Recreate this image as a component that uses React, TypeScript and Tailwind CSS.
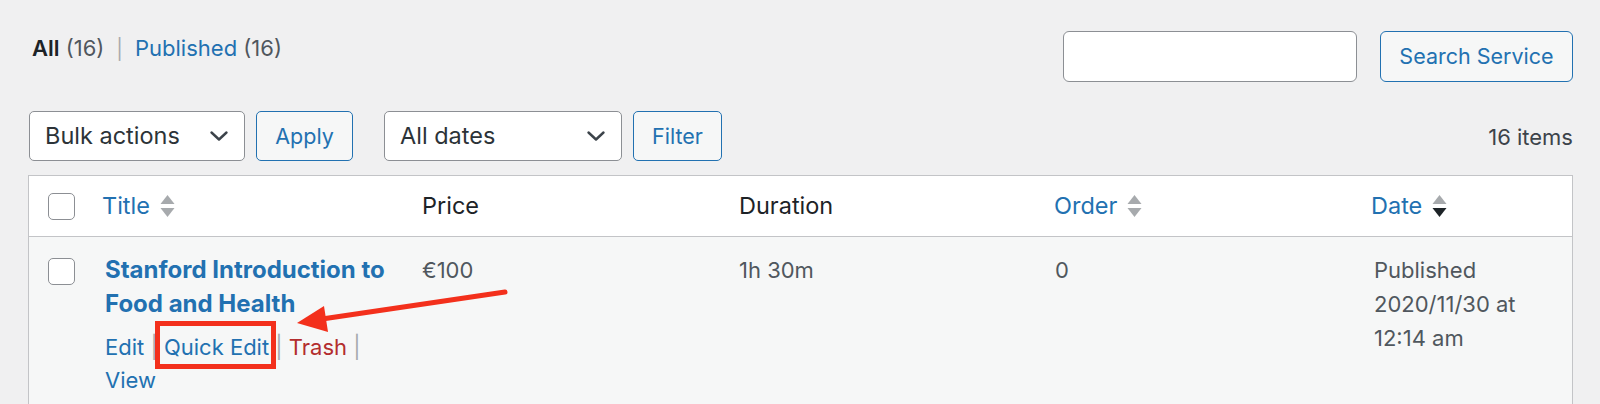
import React from "react";

function SortIcon({ active = false }: { active?: boolean }) {
  return (
    <svg width="15" height="25" viewBox="0 0 15 25" className="shrink-0">
      <polygon points="0.5,10 7.5,1 14.5,10" fill="#a7aaad" />
      <polygon points="0.5,14 14.5,14 7.5,23" fill={active ? "#1d2327" : "#a7aaad"} />
    </svg>
  );
}

function Checkbox() {
  return <div className="w-[27px] h-[27px] bg-white border-[1.5px] border-[#8c8f94] rounded-[5px]" />;
}

function Chevron() {
  return (
    <svg width="20" height="12" viewBox="0 0 20 12" className="shrink-0">
      <polyline points="2.5,2.5 10,9.5 17.5,2.5" fill="none" stroke="#3c434a" strokeWidth="2.4" strokeLinecap="round" strokeLinejoin="round" />
    </svg>
  );
}

export default function App() {
  return (
    <div className="relative w-[1600px] h-[404px] overflow-hidden bg-[#f0f0f1] pl-[28px] pr-[27px] font-['Inter','Noto_Sans',sans-serif] text-[#3c434a]">
      {/* Top row */}
      <div className="flex justify-between items-start pt-[31px]">
        <div className="pl-[4px] pt-[1px] text-[22px] leading-[33px] whitespace-nowrap">
          <span className="font-semibold text-[#1d2327]">All</span>{" "}
          <span className="text-[#50575e]">(16)</span>
          <span className="text-[#a7aaad] mx-[12px] text-[20px]">|</span>
          <span className="text-[#2271b1]">Published</span>{" "}
          <span className="text-[#50575e]">(16)</span>
        </div>
        <div className="flex gap-[23px]">
          <div className="w-[294px] h-[51px] bg-white border-[1.5px] border-[#8c8f94] rounded-[6px]" />
          <div className="w-[193px] h-[51px] flex items-center justify-center bg-[#f6f7f7] border-[1.5px] border-[#2271b1] rounded-[6px] text-[#2271b1] text-[21.5px]">
            Search Service
          </div>
        </div>
      </div>

      {/* Filters row */}
      <div className="flex items-center justify-between mt-[29px]">
        <div className="flex items-center">
          <div className="ml-[1px] w-[216px] h-[50px] flex items-center justify-between pl-[15px] pr-[15px] bg-white border-[1.5px] border-[#8c8f94] rounded-[5px] text-[#2c3338] text-[23.5px]">
            <span>Bulk actions</span>
            <Chevron />
          </div>
          <div className="ml-[11px] w-[97px] h-[50px] flex items-center justify-center bg-[#f6f7f7] border-[1.5px] border-[#2271b1] rounded-[5px] text-[#2271b1] text-[21.5px]">
            Apply
          </div>
          <div className="ml-[31px] w-[238px] h-[50px] flex items-center justify-between pl-[15px] pr-[15px] bg-white border-[1.5px] border-[#8c8f94] rounded-[5px] text-[#2c3338] text-[23.5px]">
            <span>All dates</span>
            <Chevron />
          </div>
          <div className="ml-[11px] w-[89px] h-[50px] flex items-center justify-center bg-[#f6f7f7] border-[1.5px] border-[#2271b1] rounded-[5px] text-[#2271b1] text-[21.5px]">
            Filter
          </div>
        </div>
        <div className="text-[22px] text-[#3c434a] pt-[2px]">16 items</div>
      </div>

      {/* Table */}
      <div className="mt-[14px] border border-[#c3c4c7] bg-[#f6f7f7] text-[22px]">
        <div className="grid grid-cols-[56px_320px_317px_315px_317px_1fr] h-[61px] bg-white border-b border-[#c3c4c7] items-center text-[23.5px]">
          <div className="pl-[19px] flex items-center">
            <Checkbox />
          </div>
          <div className="pl-[17px] flex items-center gap-[10px] text-[#2271b1]">
            <span>Title</span>
            <SortIcon />
          </div>
          <div className="pl-[17px] text-[#1d2327]">Price</div>
          <div className="pl-[17px] text-[#1d2327]">Duration</div>
          <div className="pl-[17px] flex items-center gap-[10px] text-[#2271b1]">
            <span>Order</span>
            <SortIcon />
          </div>
          <div className="pl-[17px] flex items-center gap-[10px] text-[#2271b1]">
            <span>Date</span>
            <SortIcon active />
          </div>
        </div>
        <div className="grid grid-cols-[56px_320px_317px_315px_317px_1fr] h-[200px] items-start leading-[34px]">
          <div className="pl-[19px] pt-[21px]">
            <Checkbox />
          </div>
          <div className="pl-[20px] pt-[16px]">
            <div className="font-bold text-[#2271b1] text-[24px] leading-[33.5px]">
              Stanford Introduction to
              <br />
              Food and Health
            </div>
            <div className="mt-[11px] text-[#2271b1] leading-[33px]">
              Edit <span className="text-[#a7aaad]">|</span> Quick Edit <span className="text-[#a7aaad]">|</span>{" "}
              <span className="text-[#b32d2e]">Trash</span> <span className="text-[#a7aaad]">|</span>
              <br />
              View
            </div>
          </div>
          <div className="pl-[17px] pt-[16px] text-[#50575e]">€100</div>
          <div className="pl-[17px] pt-[16px] text-[#50575e]">1h 30m</div>
          <div className="pl-[18px] pt-[16px] text-[#50575e]">0</div>
          <div className="pl-[20px] pt-[16px] text-[#50575e]">
            Published
            <br />
            2020/11/30 at
            <br />
            12:14 am
          </div>
        </div>
      </div>

      {/* Annotation overlay */}
      <svg className="absolute left-0 top-0 pointer-events-none" width="1600" height="404" viewBox="0 0 1600 404">
        <rect x="157.5" y="323.5" width="116" height="43" fill="none" stroke="#f3301c" strokeWidth="5" />
        <line x1="505" y1="292" x2="322" y2="319" stroke="#f3301c" strokeWidth="5" strokeLinecap="round" />
        <polygon points="297,323 324,306 328,332" fill="#f3301c" />
      </svg>
    </div>
  );
}
